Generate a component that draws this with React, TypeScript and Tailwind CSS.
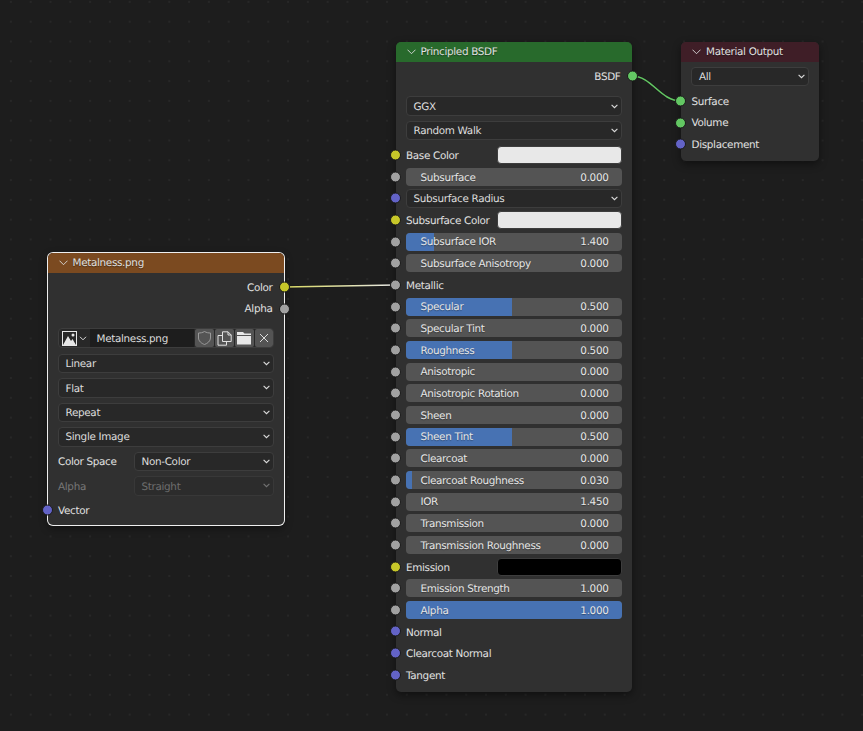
import React from "react";

const ROW = "h-[21.67px]";

function Socket({ color, side }: { color: string; side: "l" | "r" }) {
  return (
    <span
      className={`absolute top-1/2 -translate-y-1/2 w-[11px] h-[11px] rounded-full border border-[#1a1a1a] ${side === "l" ? "left-[-6px]" : "right-[-6px]"}`}
      style={{ backgroundColor: color }}
    />
  );
}

const Y = "#c7c729", G = "#a1a1a1", V = "#6363c7", N = "#63c763";

function Chevron({ dim }: { dim?: boolean }) {
  return (
    <svg width="7" height="5" viewBox="0 0 7 5" className={`shrink-0 ${dim ? "opacity-40" : ""}`}>
      <path d="M0.6 0.8 L3.5 3.7 L6.4 0.8" fill="none" stroke="#dcdcdc" strokeWidth="1.1" />
    </svg>
  );
}

function Header({ title, color, h }: { title: string; color: string; h: string }) {
  return (
    <div className={`flex items-center ${h} rounded-t-[5px] pl-[11px] gap-[5px] text-[#e0e0e0]`} style={{ backgroundColor: color }}>
      <svg width="9" height="6" viewBox="0 0 9 6" className="shrink-0">
        <path d="M0.5 0.7 L4.5 4.7 L8.5 0.7" fill="none" stroke="#dcdcdc" strokeWidth="0.9" />
      </svg>
      <span className="pt-[1px] [text-shadow:0_1px_1px_rgba(0,0,0,0.45)]">{title}</span>
    </div>
  );
}

function Dropdown({ label, dim, className = "" }: { label: string; dim?: boolean; className?: string }) {
  return (
    <div
      className={`flex items-center justify-between h-[19.5px] rounded-[4px] border pl-[7px] pr-[3px] ${dim ? "bg-[#2c2c2c] border-[#383838] text-[#6e6e6e]" : "bg-[#282828] border-[#3d3d3d] text-[#dcdcdc]"} ${className}`}
    >
      <span className="pt-[2px]">{label}</span>
      <Chevron dim={dim} />
    </div>
  );
}

function Slider({ label, value, pct }: { label: string; value: string; pct: number }) {
  return (
    <div className="relative flex items-center justify-between h-[18px] rounded-[4px] bg-[#545454] overflow-hidden pl-[15px] pr-[13px] text-[#e6e6e6]">
      <span className="absolute left-0 top-0 bottom-0 bg-[#4772b3]" style={{ width: `${pct}%` }} />
      <span className="relative pt-[2px] [text-shadow:0_1px_1px_rgba(0,0,0,0.35)]">{label}</span>
      <span className="relative pt-[2px] [text-shadow:0_1px_1px_rgba(0,0,0,0.35)]">{value}</span>
    </div>
  );
}

function Row({ socket, side = "l", className = ROW, children }: { socket?: string; side?: "l" | "r"; className?: string; children?: React.ReactNode }) {
  return (
    <div className={`relative flex flex-col justify-center px-[10px] ${className}`}>
      {socket && <Socket color={socket} side={side} />}
      {children}
    </div>
  );
}

function Label({ children, right, up }: { children: React.ReactNode; right?: boolean; up?: boolean }) {
  return <span className={`${up ? "pt-[1px]" : "pt-[3px]"} text-[#e0e0e0] ${right ? "text-right pr-[1px]" : "pl-[0.5px]"}`}>{children}</span>;
}

function Swatch({ label, color, socket }: { label: string; color: string; socket: string }) {
  return (
    <Row socket={socket}>
      <div className="flex items-center justify-between">
        <Label>{label}</Label>
        <span className="w-[125px] h-[18px] rounded-[4px] border border-[#3d3d3d]" style={{ backgroundColor: color }} />
      </div>
    </Row>
  );
}

function ImageRow() {
  const btn = "flex items-center justify-center w-[19px] h-full bg-[#545454] rounded-[2px]";
  return (
    <div className="flex items-stretch h-[20px] mx-[10px] rounded-[4px] border border-[#3d3d3d] bg-[#282828] gap-[1px] overflow-hidden">
      <div className="flex items-center gap-[2px] w-[30px] pl-[3px] shrink-0">
        <svg width="15" height="15" viewBox="0 0 15 15" className="shrink-0">
          <rect x="0.5" y="0.5" width="14" height="14" fill="none" stroke="#e6e6e6" strokeWidth="1" />
          <path d="M1 14 L6 5 L9 10 L10.5 8 L14 14 Z" fill="#e6e6e6" />
          <circle cx="11" cy="4" r="1.5" fill="#e6e6e6" />
        </svg>
        <svg width="8" height="5" viewBox="0 0 8 5" className="shrink-0">
          <path d="M1 0.8 L4 3.8 L7 0.8" fill="none" stroke="#dcdcdc" strokeWidth="1" />
        </svg>
      </div>
      <div className="flex items-center w-[104px] bg-[#1d1d1d] pl-[7px] pt-[2px] text-[#dcdcdc] shrink-0">Metalness.png</div>
      <div className={btn}>
        <svg width="15" height="16" viewBox="0 0 15 16">
          <path d="M7.5 1.5 C9.5 2.7 11.5 3 13.5 3 L13.5 8 C13.5 11 10.5 13.5 7.5 14.5 C4.5 13.5 1.5 11 1.5 8 L1.5 3 C3.5 3 5.5 2.7 7.5 1.5 Z" fill="none" stroke="#9a9a9a" strokeWidth="1" />
        </svg>
      </div>
      <div className={btn}>
        <svg width="15" height="15" viewBox="0 0 15 15">
          <path d="M5.5 0.8 H11 L14.2 4 V10.5 H5.5 Z M11 0.8 V4 H14.2" fill="none" stroke="#e0e0e0" strokeWidth="1" />
          <path d="M5 4.5 H1 V14.2 H9.5 V10.8" fill="none" stroke="#e0e0e0" strokeWidth="1" />
        </svg>
      </div>
      <div className={btn}>
        <svg width="16" height="14" viewBox="0 0 16 14">
          <path d="M1 1 H7 L8.5 2.5 H15 V4 H1 Z" fill="#e8e8e8" />
          <rect x="1" y="5" width="14" height="8.5" fill="#e8e8e8" />
        </svg>
      </div>
      <div className={`${btn} flex-1`}>
        <svg width="10" height="10" viewBox="0 0 10 10">
          <path d="M1 1 L9 9 M9 1 L1 9" stroke="#dcdcdc" strokeWidth="1" />
        </svg>
      </div>
    </div>
  );
}

const principled: Array<
  | { t: "s"; l: string; v: string; p: number }
  | { t: "c"; l: string; c: string; k: string }
  | { t: "d"; l: string }
  | { t: "i"; l: string; k: string }
> = [
  { t: "c", l: "Base Color", c: "#e8e8e8", k: Y },
  { t: "s", l: "Subsurface", v: "0.000", p: 0 },
  { t: "d", l: "Subsurface Radius" },
  { t: "c", l: "Subsurface Color", c: "#e8e8e8", k: Y },
  { t: "s", l: "Subsurface IOR", v: "1.400", p: 13 },
  { t: "s", l: "Subsurface Anisotropy", v: "0.000", p: 0 },
  { t: "i", l: "Metallic", k: G },
  { t: "s", l: "Specular", v: "0.500", p: 49.5 },
  { t: "s", l: "Specular Tint", v: "0.000", p: 0 },
  { t: "s", l: "Roughness", v: "0.500", p: 49.5 },
  { t: "s", l: "Anisotropic", v: "0.000", p: 0 },
  { t: "s", l: "Anisotropic Rotation", v: "0.000", p: 0 },
  { t: "s", l: "Sheen", v: "0.000", p: 0 },
  { t: "s", l: "Sheen Tint", v: "0.500", p: 49.5 },
  { t: "s", l: "Clearcoat", v: "0.000", p: 0 },
  { t: "s", l: "Clearcoat Roughness", v: "0.030", p: 3 },
  { t: "s", l: "IOR", v: "1.450", p: 0 },
  { t: "s", l: "Transmission", v: "0.000", p: 0 },
  { t: "s", l: "Transmission Roughness", v: "0.000", p: 0 },
  { t: "c", l: "Emission", c: "#000000", k: Y },
  { t: "s", l: "Emission Strength", v: "1.000", p: 0 },
  { t: "s", l: "Alpha", v: "1.000", p: 100 },
  { t: "i", l: "Normal", k: V },
  { t: "i", l: "Clearcoat Normal", k: V },
  { t: "i", l: "Tangent", k: V },
];

export default function App() {
  return (
    <div className="relative w-[863px] h-[731px] overflow-hidden bg-[#1d1d1d] bg-[radial-gradient(circle,#272727_1px,transparent_1.3px)] bg-[size:19.8px_19.8px] bg-[position:1px_-8px] font-['DejaVu_Sans',sans-serif] text-[10.4px] tracking-[-0.32px] leading-none [text-rendering:geometricPrecision]">
      <svg width="863" height="731" className="absolute inset-0">
        <defs>
          <linearGradient id="w1" x1="0" x2="1" y1="0" y2="0">
            <stop offset="0" stopColor="#d8d860" />
            <stop offset="1" stopColor="#e8e8e8" />
          </linearGradient>
        </defs>
        <path d="M284 287 L395 285" fill="none" stroke="#1a1a1a" strokeWidth="3" />
        <path d="M284 287 L395 285" fill="none" stroke="url(#w1)" strokeWidth="1.6" />
        <path d="M632 76 C 652 76, 660 101, 681 101" fill="none" stroke="#1a1a1a" strokeWidth="3" />
        <path d="M632 76 C 652 76, 660 101, 681 101" fill="none" stroke="#63c763" strokeWidth="1.6" />
      </svg>

      {/* Image texture node */}
      <section className="absolute left-[47.5px] top-[252.5px] w-[236px] rounded-[5px] bg-[#303030] ring-1 ring-[#efefef] shadow-[0_3px_8px_rgba(0,0,0,0.45)] pb-[2px]">
        <Header title="Metalness.png" color="#7b4a20" h="h-[20px]" />
        <div className="pt-[4px]">
          <Row socket={Y} side="r"><Label right up>Color</Label></Row>
          <Row socket={G} side="r"><Label right up>Alpha</Label></Row>
          <div className="mt-[8.5px]"><ImageRow /></div>
          <div className="mt-[2.8px]">
            <Row className="h-[24.5px]"><Dropdown label="Linear" /></Row>
            <Row className="h-[24.5px]"><Dropdown label="Flat" /></Row>
            <Row className="h-[24.5px]"><Dropdown label="Repeat" /></Row>
            <Row className="h-[24.5px]"><Dropdown label="Single Image" className="[&>span]:pt-0" /></Row>
            <Row className="h-[24.5px]">
              <div className="flex items-center justify-between">
                <Label up>Color Space</Label>
                <Dropdown label="Non-Color" className="w-[140px]" />
              </div>
            </Row>
            <Row className="h-[24.5px]">
              <div className="flex items-center justify-between">
                <span className="pt-[3px] pl-[0.5px] text-[#777777]">Alpha</span>
                <Dropdown label="Straight" dim className="w-[140px]" />
              </div>
            </Row>
            <Row socket={V} className="h-[24.5px]"><Label up>Vector</Label></Row>
          </div>
        </div>
      </section>

      {/* Principled BSDF node */}
      <section className="absolute left-[395.5px] top-[42px] w-[236px] rounded-[5px] bg-[#303030] shadow-[0_3px_8px_rgba(0,0,0,0.45)] pb-[6px]">
        <Header title="Principled BSDF" color="#286a2c" h="h-[20px]" />
        <div className="pt-[3.2px]">
          <Row socket={N} side="r"><Label right>BSDF</Label></Row>
          <div className="mt-[7px]"><Row className="h-[24.4px]"><Dropdown label="GGX" /></Row></div>
          <Row className="h-[24.4px]"><Dropdown label="Random Walk" /></Row>
          <div className="mt-[1.6px]">
            {principled.map((r) => {
              if (r.t === "c") return <Swatch key={r.l} label={r.l} color={r.c} socket={r.k} />;
              if (r.t === "d") return <Row key={r.l} socket={V}><Dropdown label={r.l} /></Row>;
              if (r.t === "i") return <Row key={r.l} socket={r.k}><Label>{r.l}</Label></Row>;
              return <Row key={r.l} socket={G}><Slider label={r.l} value={r.v} pct={r.p} /></Row>;
            })}
          </div>
        </div>
      </section>

      {/* Material output node */}
      <section className="absolute left-[681px] top-[42px] w-[138px] rounded-[5px] bg-[#303030] shadow-[0_3px_8px_rgba(0,0,0,0.45)] pb-[6px]">
        <Header title="Material Output" color="#3f1e27" h="h-[20px]" />
        <div className="pt-[2px]">
          <Row className="h-[24.5px]"><Dropdown label="All" /></Row>
          <div className="mt-[1.6px]">
            <Row socket={N}><Label>Surface</Label></Row>
            <Row socket={N}><Label up>Volume</Label></Row>
            <Row socket={V}><Label up>Displacement</Label></Row>
          </div>
        </div>
      </section>
    </div>
  );
}
